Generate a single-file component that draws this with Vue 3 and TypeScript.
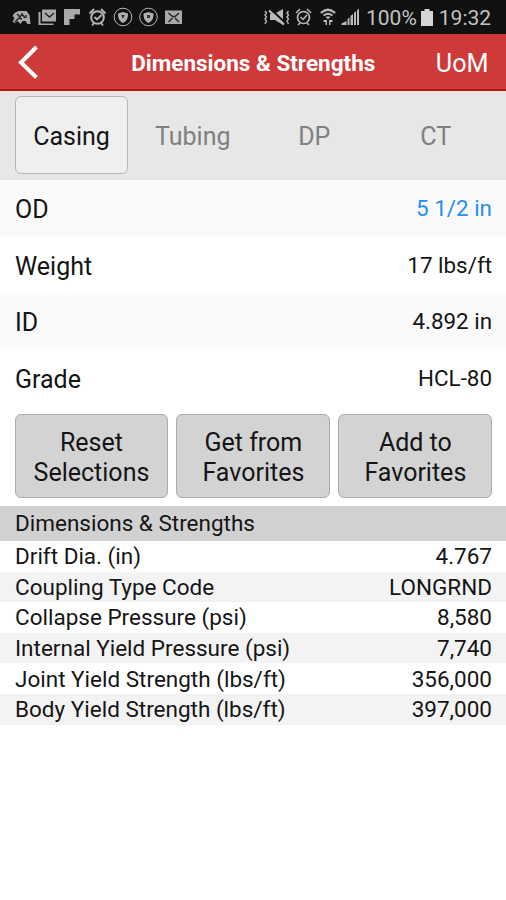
<script setup lang="ts">
import { ref } from 'vue'

interface Row { label: string; value: string; active?: boolean }

const tabs: string[] = ['Casing', 'Tubing', 'DP', 'CT']
const selected = ref('Casing')
const selections: Row[] = [
  { label: 'OD', value: '5 1/2 in', active: true },
  { label: 'Weight', value: '17 lbs/ft' },
  { label: 'ID', value: '4.892 in' },
  { label: 'Grade', value: 'HCL-80' },
]
const actions: string[][] = [['Reset', 'Selections'], ['Get from', 'Favorites'], ['Add to', 'Favorites']]
const results: Row[] = [
  { label: 'Drift Dia. (in)', value: '4.767' },
  { label: 'Coupling Type Code', value: 'LONGRND' },
  { label: 'Collapse Pressure (psi)', value: '8,580' },
  { label: 'Internal Yield Pressure (psi)', value: '7,740' },
  { label: 'Joint Yield Strength (lbs/ft)', value: '356,000' },
  { label: 'Body Yield Strength (lbs/ft)', value: '397,000' },
]
</script>

<template>
  <div class="app">
    <div class="status">
      <svg class="notices" viewBox="0 0 190 34" width="190" height="34">
        <g fill="#a9a9a9">
          <path d="M12.500 16l2-3 4-2h8l3 4 1 9h-3l-2-3h-3l-2 3-3-3-2 2-3-1 2-4z" />
          <path d="M42 9.500h14v12H42z" />
          <path d="M38.500 12h2v11.500h13v1.500H38.500z" />
          <path d="M64 9h16v5.500h-5.500v4.500h-5v6H64z" />
          <path d="M165 10.500h17v13.500h-17z" />
        </g>
        <path d="M17 14l3 3 2-3 3 4M15 22l4-4 3 1M26 15v3M45 13l4.500 4 4.500-4M168.500 13l4 3.500h2.500l4-3.500M168.500 22l4-4M179 22l-4-4" fill="none" stroke="#222" stroke-width="1.400" />
        <g fill="none" stroke="#b5b5b5">
          <circle cx="97.500" cy="17.500" r="6.300" stroke-width="2" />
          <path d="M89.500 13.500l4.500-4.500M101 9l4.500 4.500M92 25.500l2-2.500M103 25.500l-2-2.500M94.500 17l2.500 2.500 4.500-4.500" stroke-width="1.800" />
          <circle cx="123" cy="17" r="8.800" stroke-width="1" />
          <circle cx="148.500" cy="17" r="8.800" stroke-width="1" />
        </g>
        <path d="M118 13.500l5-1.500 5 1.500c0 4.500-1 7.500-5 9.500-4-2-5-5-5-9.500zM143.500 13.500l5-1.500 5 1.500c0 4.500-1 7.500-5 9.500-4-2-5-5-5-9.500z" fill="#b0b0b0" />
        <path d="M121 15h4l-2 4zM147 15h3v3h-3z" fill="#333" />
      </svg>
      <svg class="signals" viewBox="262 0 100 34" width="100" height="34">
        <g fill="none" stroke="#b8b8b8">
          <path d="M265 11l1.500 2-1.500 2 1.500 2-1.500 2 1.500 2-1.500 3M288.500 11l-1.500 2 1.500 2-1.500 2 1.500 2-1.500 2 1.500 3" stroke-width="1.400" />
          <circle cx="303.500" cy="17.500" r="6" stroke-width="1.700" />
          <path d="M296 13l4-4M307 9l4 4M298 25l2-2M309 25l-2-2M300.500 17l2.500 2.500 4-4.500" stroke-width="1.500" />
          <path d="M320.800 13q7.200-6.500 14.400 0" stroke-width="2.200" />
          <path d="M323.500 15.500q4.500-3.500 9 0" stroke-width="2" />
        </g>
        <g fill="#b8b8b8">
          <path d="M270 14h4l9-5v16l-8-5h-5z" />
          <path d="M325.500 16.500h5l-2.500 3zM323.500 20h3.500v5h-1.500v-3h-2zM329 20h3.500v2h-2v3H329z" />
          <path d="M341.500 23.500l5-2.500v4h-5zM347.500 19l2-1.500V25h-2zM350.500 16l2.500-2v11h-2.500zM354 13l2-2v14h-2zM357 10.500l2-2V25h-2z" />
        </g>
        <path d="M270 8.500l16 15" stroke="#111" stroke-width="2" />
        <path d="M269 10.500l15 14" stroke="#bbb" stroke-width="2.200" />
      </svg>
      <span class="percent">100%</span>
      <svg class="battery" viewBox="0 0 12 17" width="12" height="17"><path d="M3.500 0h5v2H12v15H0V2h3.500z" fill="#d6d6d6" /></svg>
      <span class="clock">19:32</span>
    </div>
    <header class="bar">
      <svg class="back" viewBox="0 0 24 36" width="24" height="36"><path d="M21.500 3L6 18.500L21.500 33.500" fill="none" stroke="#fff" stroke-width="4" /></svg>
      <h1>Dimensions &amp; Strengths</h1>
      <span class="uom">UoM</span>
    </header>
    <nav class="tabs">
      <button v-for="t in tabs" :key="t" :class="['tab', { on: t === selected }]" @click="selected = t">{{ t }}</button>
    </nav>
    <section class="selections">
      <div v-for="r in selections" :key="r.label" class="pick">
        <span class="name">{{ r.label }}</span><span :class="['value', { active: r.active }]">{{ r.value }}</span>
      </div>
    </section>
    <div class="actions">
      <button v-for="a in actions" :key="a[0]" class="action"><span>{{ a[0] }}</span><span>{{ a[1] }}</span></button>
    </div>
    <h2 class="title">Dimensions &amp; Strengths</h2>
    <section class="results">
      <div v-for="r in results" :key="r.label" class="result"><span>{{ r.label }}</span><span>{{ r.value }}</span></div>
    </section>
  </div>
</template>

<style>
body { margin: 0; background: #fff; }
</style>
<style scoped>
.app { width: 506px; height: 900px; overflow: hidden; font-family: Roboto, sans-serif; color: #151515; background: #fff; }
.status { height: 34px; display: flex; align-items: center; background: #111; color: #c2c2c2; font-size: 21px; }
.signals { margin-left: 72px; }
.percent { margin-left: 4px; padding-top: 2px; }
.battery { margin-left: 4px; }
.clock { margin-left: 6px; padding-top: 2px; }
.bar { height: 57px; box-sizing: border-box; display: grid; grid-template-columns: 80px 1fr 80px; align-items: center; padding: 0 17.500px 0 15px; background: #cd3a39; border-bottom: 2px solid #c41213; color: #fff; }
.back { margin-top: 1px; }
h1 { margin: 0; padding: 2px 0 0 3px; font-size: 22.500px; font-weight: 700; text-align: center; white-space: nowrap; }
.uom { padding-top: 3px; font-size: 25.200px; text-align: right; }
.tabs { height: 88.500px; box-sizing: border-box; padding: 5px 9.500px 6px 15px; display: grid; grid-template-columns: 117px 1fr 1fr 1fr; background: #e7e7e7; }
.tab { font: 400 25px Roboto, sans-serif; color: #808080; background: none; border: 0; padding: 3px 0 0; }
.tab.on { margin-right: 4px; color: #151515; background: #efefef; border: 1.500px solid #b5b5b5; border-radius: 6px; }
.pick { height: 56.500px; padding: 0 14px 0 15px; display: flex; align-items: center; justify-content: space-between; }
.pick:nth-child(odd) { background: #fafafa; }
.name { padding-top: 4px; font-size: 25px; }
.value { padding-top: 1px; font-size: 22.400px; }
.active { color: #1f8ff0; }
.actions { display: grid; grid-template-columns: repeat(3, 1fr); gap: 8px; padding: 8.500px 13.700px 7.500px 14.500px; height: 100px; box-sizing: border-box; }
.action { font: 400 25px/30px Roboto, sans-serif; color: #151515; background: #d3d3d3; border: 1.500px solid #acacac; border-radius: 6px; padding: 4px 0 0; display: flex; flex-direction: column; align-items: center; justify-content: center; }
.title { margin: 0; height: 35.500px; padding-left: 15px; display: flex; align-items: center; background: #d1d1d1; font-size: 22.500px; font-weight: 400; }
.result { height: 30.600px; padding: 0 14px 0 15px; display: flex; align-items: center; justify-content: space-between; font-size: 22.500px; }
.result:nth-child(even) { background: #f3f3f3; }
</style>
